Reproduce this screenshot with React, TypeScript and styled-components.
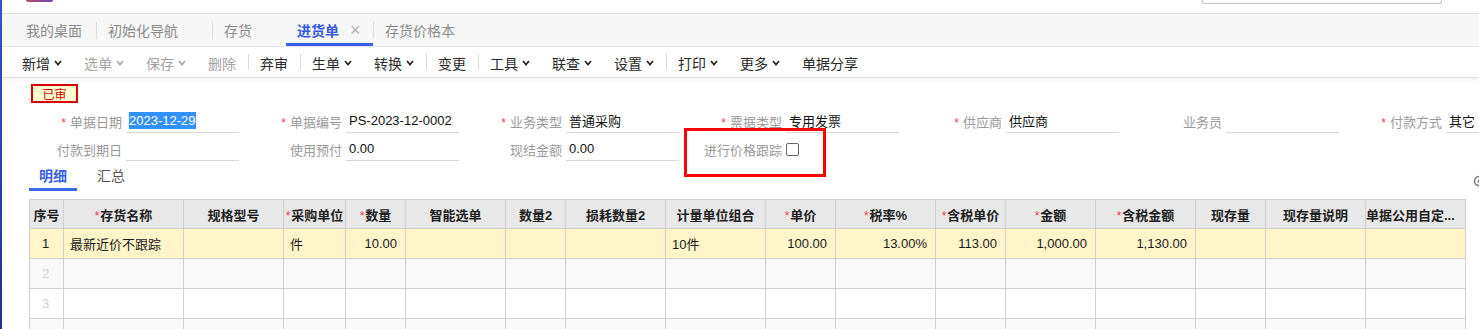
import React from "react";
import styled, { createGlobalStyle } from "styled-components";

const GlobalStyle = createGlobalStyle`
  html, body {
    margin: 0;
    padding: 0;
    background: #fff;
    overflow: hidden;
  }
  body {
    font-family: "Liberation Sans", "Noto Sans CJK SC", sans-serif;
    font-size: 13px;
    color: #333;
  }
`;

const Shell = styled.div`
  display: flex;
  width: 1479px;
  height: 329px;
  overflow: hidden;
`;

const SideStrip = styled.div`
  width: 2px;
  flex: none;
  background: linear-gradient(#3552c8, #22318d);
`;

const Main = styled.div`
  flex: 1;
  min-width: 0;
  display: flex;
  flex-direction: column;
  position: relative;
  & > * {
    flex: none;
  }
`;

const TopBar = styled.div`
  height: 13px;
  display: flex;
  align-items: flex-start;
`;

const LogoTail = styled.div`
  width: 27px;
  height: 2px;
  margin-left: 24px;
  background: linear-gradient(90deg, #b84a6e, #6a4aa8);
  border-radius: 0 0 3px 3px;
`;

const SearchTail = styled.div`
  width: 238px;
  height: 3px;
  margin-left: auto;
  margin-right: 37px;
  border: 1px solid #c4c4c4;
  border-top: none;
  border-radius: 0 0 3px 3px;
`;

const TabBar = styled.div`
  height: 32px;
  display: flex;
  align-items: stretch;
  background: #f7f7f8;
  border-top: 1px solid #dedede;
  border-bottom: 1px solid #e4e4ec;
  padding-left: 13px;
`;

const Tab = styled.div<{ $active?: boolean; $plain?: boolean }>`
  display: flex;
  align-items: center;
  padding: 3px ${(p) => (p.$plain ? "14px" : "12px")} 0 11px;
  font-size: 14px;
  color: ${(p) => (p.$active ? "#3458e0" : "#8a8a8a")};
  font-weight: ${(p) => (p.$active ? 600 : 400)};
  border-bottom: 3px solid ${(p) => (p.$active ? "#3a5ee6" : "transparent")};
  box-sizing: border-box;
`;

const TabClose = styled.span<{ $show?: boolean }>`
  width: 11px;
  margin-left: 11px;
  font-size: 18px;
  font-weight: 400;
  color: #b0b0b0;
  line-height: 1;
  visibility: ${(p) => (p.$show ? "visible" : "hidden")};
`;

const TabSep = styled.div`
  width: 1px;
  height: 17px;
  align-self: center;
  background: #dcdcdc;
`;

const Toolbar = styled.div`
  height: 30px;
  display: flex;
  align-items: center;
  padding-left: 9px;
  background: #fff;
  border-bottom: 1px solid #e2e2e2;
  box-shadow: 0 2px 3px rgba(0, 0, 0, 0.06);
`;

const ToolItem = styled.div<{ $disabled?: boolean }>`
  display: flex;
  align-items: center;
  gap: 4px;
  padding: 1px 11px 0;
  font-size: 14px;
  color: ${(p) => (p.$disabled ? "#a3a3a3" : "#2b2b2b")};
`;

const ToolSep = styled.div`
  width: 1px;
  height: 16px;
  margin-left: 1px;
  background: #dadada;
`;

const Content = styled.div`
  position: relative;
  padding-left: 24px;
`;

const StatusBadge = styled.div`
  margin: 6px 0 0 5px;
  width: 47px;
  height: 19px;
  box-sizing: border-box;
  border: 2px solid #d80000;
  background: #ffffd2;
  color: #d40000;
  font-size: 12px;
  display: flex;
  align-items: center;
  justify-content: center;
`;

const FormGrid = styled.div`
  margin-top: 6px;
  display: flex;
  flex-direction: column;
  gap: 4px;
`;

const FormRow = styled.div`
  display: flex;
  white-space: nowrap;
`;

const Field = styled.div`
  width: 220px;
  flex: none;
  display: flex;
  align-items: center;
  height: 24px;
`;

const Label = styled.div`
  width: 96px;
  margin-right: 4px;
  text-align: right;
  color: #9a9a9a;
  font-size: 13px;
`;

const Star = styled.span`
  color: #f0405a;
  margin-right: 4px;
  font-size: 12px;
`;

const Input = styled.div`
  width: 113px;
  height: 24px;
  box-sizing: border-box;
  border-bottom: 1px solid #d8d8d8;
  padding-left: 3px;
  display: flex;
  align-items: center;
  color: #111;
  font-size: 13px;
  overflow: hidden;
`;

const Selected = styled.span`
  background: #3391ff;
  color: #fff;
  padding: 1px 0;
`;

const CheckBox = styled.div`
  width: 11px;
  height: 11px;
  border: 1px solid #666;
  border-radius: 2px;
  background: #fff;
`;

const Highlight = styled.div`
  position: absolute;
  left: 682px;
  top: 50px;
  width: 142px;
  height: 49px;
  box-sizing: border-box;
  border: 3px solid #ff0000;
  pointer-events: none;
`;

const SubTabs = styled.div`
  display: flex;
  gap: 10px;
  margin: 0 0 0 3px;
  height: 30px;
`;

const SubTab = styled.div<{ $active?: boolean }>`
  width: 48px;
  display: flex;
  align-items: center;
  justify-content: center;
  box-sizing: border-box;
  font-size: 14px;
  font-weight: ${(p) => (p.$active ? 700 : 400)};
  color: ${(p) => (p.$active ? "#3a62e0" : "#555")};
  border-bottom: 3px solid ${(p) => (p.$active ? "#3a6ae6" : "transparent")};
`;

const CornerIcon = styled.div`
  position: absolute;
  right: -6px;
  top: 97px;
`;

const Grid = styled.table`
  margin: 8px 0 0 3px;
  border-collapse: collapse;
  table-layout: fixed;
  width: 1436px;
`;

const HeadCell = styled.th<{ $align?: string }>`
  height: 28px;
  padding: 0;
  background: #e8e8e8;
  border: 1px solid #cfcfcf;
  font-size: 13px;
  font-weight: 700;
  color: #1f1f1f;
  text-align: ${(p) => p.$align || "center"};
  white-space: nowrap;
  overflow: hidden;
`;

const HeadStar = styled.span`
  color: #f0405a;
  font-weight: 400;
  font-size: 12px;
  margin-right: 1px;
`;

const BodyRow = styled.tr<{ $bg: string }>`
  background: ${(p) => p.$bg};
`;

const Cell = styled.td<{ $align?: string; $muted?: boolean }>`
  height: 29px;
  padding: 0 8px 0 6px;
  border: 1px solid #d0d0d0;
  text-align: ${(p) => p.$align || "left"};
  color: ${(p) => (p.$muted ? "#cfcfcf" : "#1a1a1a")};
  font-size: 13px;
  white-space: nowrap;
  overflow: hidden;
`;

const Chevron = ({ color }: { color: string }) => (
  <svg width="8" height="6" viewBox="0 0 8 6">
    <polyline
      points="1,1 4,4.5 7,1"
      fill="none"
      stroke={color}
      strokeWidth="1.8"
    />
  </svg>
);

type Tool = { label: string; menu?: boolean; disabled?: boolean } | "sep";

const tools: Tool[] = [
  { label: "新增", menu: true },
  { label: "选单", menu: true, disabled: true },
  { label: "保存", menu: true, disabled: true },
  { label: "删除", disabled: true },
  "sep",
  { label: "弃审" },
  "sep",
  { label: "生单", menu: true },
  { label: "转换", menu: true },
  "sep",
  { label: "变更" },
  "sep",
  { label: "工具", menu: true },
  { label: "联查", menu: true },
  { label: "设置", menu: true },
  "sep",
  { label: "打印", menu: true },
  { label: "更多", menu: true },
  { label: "单据分享" },
];

type Col = { title: string; w: number; req?: boolean; align?: string };

const columns: Col[] = [
  { title: "序号", w: 34, align: "center" },
  { title: "存货名称", w: 120, req: true },
  { title: "规格型号", w: 100 },
  { title: "采购单位", w: 62, req: true },
  { title: "数量", w: 60, req: true, align: "right" },
  { title: "智能选单", w: 100 },
  { title: "数量2", w: 60, align: "right" },
  { title: "损耗数量2", w: 100, align: "right" },
  { title: "计量单位组合", w: 100 },
  { title: "单价", w: 70, req: true, align: "right" },
  { title: "税率%", w: 100, req: true, align: "right" },
  { title: "含税单价", w: 70, req: true, align: "right" },
  { title: "金额", w: 90, req: true, align: "right" },
  { title: "含税金额", w: 100, req: true, align: "right" },
  { title: "现存量", w: 70, align: "right" },
  { title: "现存量说明", w: 100 },
  { title: "单据公用自定...", w: 100 },
];

const firstRow = [
  "1",
  "最新近价不跟踪",
  "",
  "件",
  "10.00",
  "",
  "",
  "",
  "10件",
  "100.00",
  "13.00%",
  "113.00",
  "1,000.00",
  "1,130.00",
  "",
  "",
  "",
];

const rowBgs = ["#fff5c8", "#f9f9f9", "#ffffff", "#f9f9f9"];

const row1 = [
  { label: "单据日期", req: true, value: <Selected>2023-12-29</Selected> },
  { label: "单据编号", req: true, value: "PS-2023-12-0002" },
  { label: "业务类型", req: true, value: "普通采购" },
  { label: "票据类型", req: true, value: "专用发票" },
  { label: "供应商", req: true, value: "供应商" },
  { label: "业务员", value: "" },
  { label: "付款方式", req: true, value: "其它" },
];

const row2 = [
  { label: "付款到期日", value: "" },
  { label: "使用预付", value: "0.00" },
  { label: "现结金额", value: "0.00" },
];

const App = (): JSX.Element => {
  return (
    <>
      <GlobalStyle />
      <Shell>
        <SideStrip />
        <Main>
          <TopBar>
            <LogoTail />
            <SearchTail />
          </TopBar>
          <TabBar>
            <Tab $plain>我的桌面</Tab>
            <TabSep />
            <Tab>
              初始化导航
              <TabClose>×</TabClose>
            </Tab>
            <TabSep />
            <Tab>
              存货
              <TabClose>×</TabClose>
            </Tab>
            <Tab $active>
              进货单
              <TabClose $show>×</TabClose>
            </Tab>
            <TabSep />
            <Tab>存货价格本</Tab>
          </TabBar>
          <Toolbar>
            {tools.map((t, i) =>
              t === "sep" ? (
                <ToolSep key={i} />
              ) : (
                <ToolItem key={i} $disabled={t.disabled}>
                  {t.label}
                  {t.menu && (
                    <Chevron color={t.disabled ? "#a8a8a8" : "#2b2b2b"} />
                  )}
                </ToolItem>
              )
            )}
          </Toolbar>
          <Content>
            <StatusBadge>已审</StatusBadge>
            <FormGrid>
              <FormRow>
                {row1.map((f) => (
                  <Field key={f.label}>
                    <Label>
                      {f.req && <Star>*</Star>}
                      {f.label}
                    </Label>
                    <Input>{f.value}</Input>
                  </Field>
                ))}
              </FormRow>
              <FormRow>
                {row2.map((f) => (
                  <Field key={f.label}>
                    <Label>{f.label}</Label>
                    <Input>{f.value}</Input>
                  </Field>
                ))}
                <Field>
                  <Label>进行价格跟踪</Label>
                  <CheckBox />
                </Field>
              </FormRow>
            </FormGrid>
            <Highlight />
            <SubTabs>
              <SubTab $active>明细</SubTab>
              <SubTab>汇总</SubTab>
            </SubTabs>
            <CornerIcon>
              <svg width="12" height="12" viewBox="0 0 12 12">
                <circle cx="6" cy="6" r="4.5" fill="none" stroke="#777" strokeWidth="1.5" />
                <circle cx="6" cy="6" r="1.5" fill="#777" />
              </svg>
            </CornerIcon>
            <Grid>
              <colgroup>
                {columns.map((c) => (
                  <col key={c.title} style={{ width: c.w }} />
                ))}
              </colgroup>
              <thead>
                <tr>
                  {columns.map((c, i) => (
                    <HeadCell key={c.title} $align={i === columns.length - 1 ? "left" : "center"}>
                      {c.req && <HeadStar>*</HeadStar>}
                      {c.title}
                    </HeadCell>
                  ))}
                </tr>
              </thead>
              <tbody>
                {rowBgs.map((bg, r) => (
                  <BodyRow key={r} $bg={bg}>
                    {columns.map((c, i) => (
                      <Cell
                        key={c.title}
                        $align={c.align}
                        $muted={i === 0 && r > 0}
                      >
                        {i === 0
                          ? r < 3
                            ? String(r + 1)
                            : ""
                          : r === 0
                          ? firstRow[i]
                          : ""}
                      </Cell>
                    ))}
                  </BodyRow>
                ))}
              </tbody>
            </Grid>
          </Content>
        </Main>
      </Shell>
    </>
  );
};

export default App;
